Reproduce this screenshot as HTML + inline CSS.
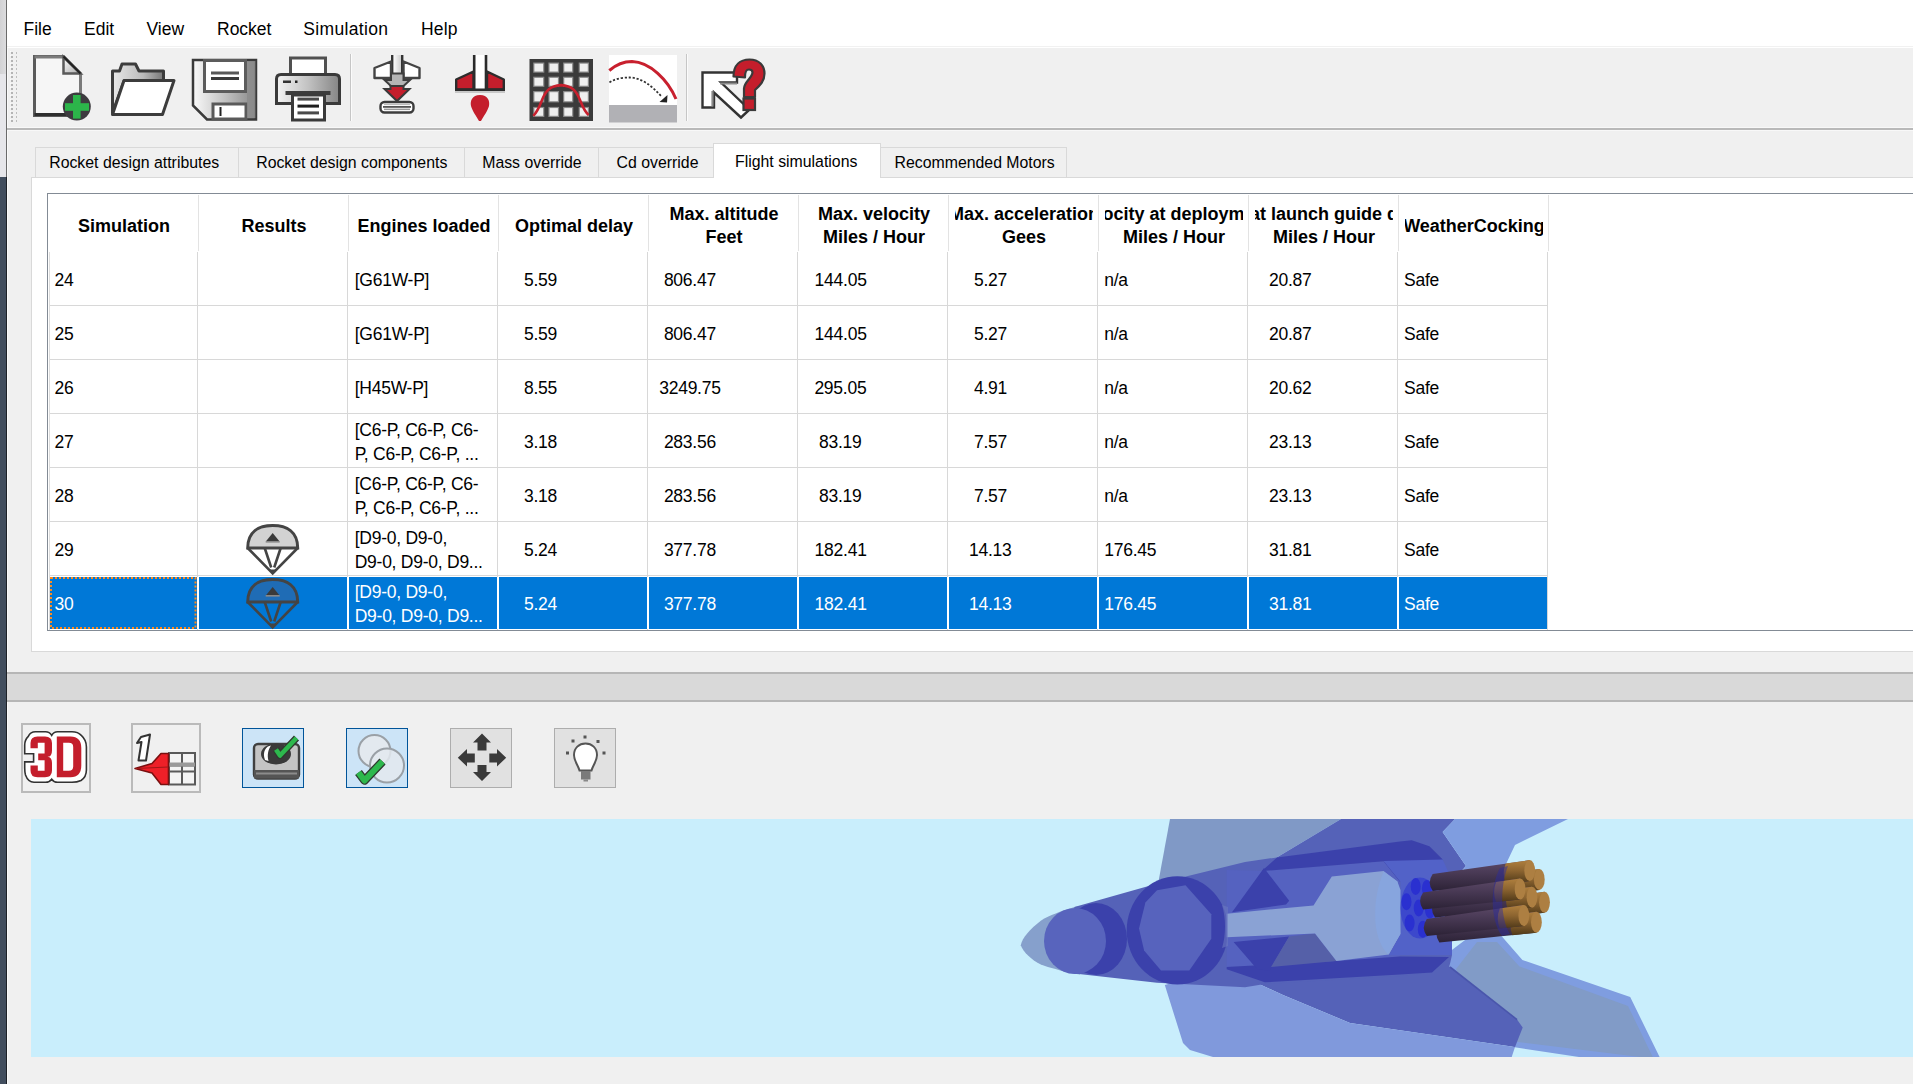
<!DOCTYPE html><html><head><meta charset="utf-8"><style>
html,body{margin:0;padding:0}
body{width:1913px;height:1084px;overflow:hidden;background:#f0f0f0;position:relative;font-family:"Liberation Sans",sans-serif;color:#000}
.a{position:absolute}
.t{position:absolute;white-space:pre;line-height:1}
svg{position:absolute;left:0;top:0;overflow:visible}
</style></head><body>

<div class="a" style="left:0px;top:0px;width:6px;height:74px;background:linear-gradient(90deg,#d2d2d4,#dcdcde);"></div>
<div class="a" style="left:0px;top:74px;width:6px;height:103px;background:#e6e6ea;"></div>
<div class="a" style="left:0px;top:177px;width:6px;height:907px;background:#424e5e;"></div>
<div class="a" style="left:6px;top:0px;width:1px;height:177px;background:#6a6a6a;"></div>
<div class="a" style="left:6px;top:177px;width:1px;height:907px;background:#1e2228;"></div>
<div class="a" style="left:7px;top:0px;width:1px;height:1084px;background:#fafafa;"></div>
<div class="a" style="left:7px;top:0px;width:1906px;height:46px;background:#fff;"></div>
<div class="a" style="left:7px;top:46px;width:1906px;height:1px;background:#f1f1f1;"></div>
<div class="a" style="left:7px;top:47px;width:1906px;height:1px;background:#fff;"></div>
<div class="t" style="left:23.50px;top:21.19px;font-size:17.5px;">File</div>
<div class="t" style="left:84.00px;top:21.19px;font-size:17.5px;">Edit</div>
<div class="t" style="left:146.50px;top:21.19px;font-size:17.5px;">View</div>
<div class="t" style="left:217.00px;top:21.19px;font-size:17.5px;">Rocket</div>
<div class="t" style="left:303.20px;top:21.19px;font-size:17.5px;letter-spacing:0.35px;">Simulation</div>
<div class="t" style="left:421.00px;top:21.19px;font-size:17.5px;letter-spacing:0.2px;">Help</div>
<div class="a" style="left:8px;top:127px;width:1905px;height:1px;background:#f8f8f8;"></div>
<div class="a" style="left:7px;top:128px;width:1906px;height:2px;background:#b9b9b9;"></div>
<div class="a" style="left:8px;top:130px;width:1905px;height:1px;background:#f8f8f8;"></div>
<div class="a" style="left:31px;top:177px;width:1882px;height:475px;background:#fff;border-left:1px solid #d9d9d9;border-top:1px solid #d9d9d9;border-bottom:1px solid #d9d9d9;box-sizing:border-box"></div>
<div class="a" style="left:35px;top:147px;width:204px;height:31px;background:#f0f0f0;border:1px solid #d9d9d9;box-sizing:border-box"></div>
<div class="t" style="left:49.20px;top:154.78px;font-size:15.85px;">Rocket design attributes</div>
<div class="a" style="left:238px;top:147px;width:227px;height:31px;background:#f0f0f0;border:1px solid #d9d9d9;box-sizing:border-box"></div>
<div class="t" style="left:256.20px;top:154.78px;font-size:15.85px;">Rocket design components</div>
<div class="a" style="left:464px;top:147px;width:135px;height:31px;background:#f0f0f0;border:1px solid #d9d9d9;box-sizing:border-box"></div>
<div class="t" style="left:482.20px;top:154.78px;font-size:15.85px;">Mass override</div>
<div class="a" style="left:598px;top:147px;width:116px;height:31px;background:#f0f0f0;border:1px solid #d9d9d9;box-sizing:border-box"></div>
<div class="t" style="left:616.60px;top:154.78px;font-size:15.85px;">Cd override</div>
<div class="a" style="left:880px;top:147px;width:187px;height:31px;background:#f0f0f0;border:1px solid #d9d9d9;box-sizing:border-box"></div>
<div class="t" style="left:894.50px;top:154.78px;font-size:15.85px;">Recommended Motors</div>
<div class="a" style="left:713px;top:143px;width:168px;height:35px;background:#fff;border:1px solid #d9d9d9;border-bottom:none;box-sizing:border-box"></div>
<div class="t" style="left:735.00px;top:153.58px;font-size:15.85px;">Flight simulations</div>
<div class="a" style="left:47px;top:193px;width:1866px;height:438px;background:#fff;border-left:1px solid #838b95;border-top:1px solid #838b95;border-bottom:1px solid #838b95;box-sizing:border-box"></div>
<div class="a" style="left:198px;top:195px;width:1px;height:56px;background:#e3e3e3;"></div>
<div class="a" style="left:348px;top:195px;width:1px;height:56px;background:#e3e3e3;"></div>
<div class="a" style="left:498px;top:195px;width:1px;height:56px;background:#e3e3e3;"></div>
<div class="a" style="left:648px;top:195px;width:1px;height:56px;background:#e3e3e3;"></div>
<div class="a" style="left:798px;top:195px;width:1px;height:56px;background:#e3e3e3;"></div>
<div class="a" style="left:948px;top:195px;width:1px;height:56px;background:#e3e3e3;"></div>
<div class="a" style="left:1098px;top:195px;width:1px;height:56px;background:#e3e3e3;"></div>
<div class="a" style="left:1248px;top:195px;width:1px;height:56px;background:#e3e3e3;"></div>
<div class="a" style="left:1398px;top:195px;width:1px;height:56px;background:#e3e3e3;"></div>
<div class="a" style="left:1548px;top:195px;width:1px;height:56px;background:#e3e3e3;"></div>
<div class="t" style="left:55px;top:216.76px;width:138px;height:22px;overflow:hidden;text-align:center;font-size:18px;font-weight:bold"><span style="display:inline-block;margin:0 -200px">Simulation</span></div>
<div class="t" style="left:205px;top:216.76px;width:138px;height:22px;overflow:hidden;text-align:center;font-size:18px;font-weight:bold"><span style="display:inline-block;margin:0 -200px">Results</span></div>
<div class="t" style="left:355px;top:216.76px;width:138px;height:22px;overflow:hidden;text-align:center;font-size:18px;font-weight:bold"><span style="display:inline-block;margin:0 -200px">Engines loaded</span></div>
<div class="t" style="left:505px;top:216.76px;width:138px;height:22px;overflow:hidden;text-align:center;font-size:18px;font-weight:bold"><span style="display:inline-block;margin:0 -200px">Optimal delay</span></div>
<div class="t" style="left:655px;top:204.76px;width:138px;height:22px;overflow:hidden;text-align:center;font-size:18px;font-weight:bold"><span style="display:inline-block;margin:0 -200px">Max. altitude</span></div>
<div class="t" style="left:655px;top:228.36px;width:138px;height:22px;overflow:hidden;text-align:center;font-size:18px;font-weight:bold"><span style="display:inline-block;margin:0 -200px">Feet</span></div>
<div class="t" style="left:805px;top:204.76px;width:138px;height:22px;overflow:hidden;text-align:center;font-size:18px;font-weight:bold"><span style="display:inline-block;margin:0 -200px">Max. velocity</span></div>
<div class="t" style="left:805px;top:228.36px;width:138px;height:22px;overflow:hidden;text-align:center;font-size:18px;font-weight:bold"><span style="display:inline-block;margin:0 -200px">Miles / Hour</span></div>
<div class="t" style="left:955px;top:204.76px;width:138px;height:22px;overflow:hidden;text-align:center;font-size:18px;font-weight:bold"><span style="display:inline-block;margin:0 -200px">Max. acceleration</span></div>
<div class="t" style="left:955px;top:228.36px;width:138px;height:22px;overflow:hidden;text-align:center;font-size:18px;font-weight:bold"><span style="display:inline-block;margin:0 -200px">Gees</span></div>
<div class="t" style="left:1105px;top:204.76px;width:138px;height:22px;overflow:hidden;font-size:18px;font-weight:bold"><span style="position:absolute;left:-2.5px;top:0">ocity at deployment</span></div>
<div class="t" style="left:1105px;top:228.36px;width:138px;height:22px;overflow:hidden;text-align:center;font-size:18px;font-weight:bold"><span style="display:inline-block;margin:0 -200px">Miles / Hour</span></div>
<div class="t" style="left:1255px;top:204.76px;width:138px;height:22px;overflow:hidden;font-size:18px;font-weight:bold"><span style="position:absolute;left:-5px;top:0">at launch guide departure</span></div>
<div class="t" style="left:1255px;top:228.36px;width:138px;height:22px;overflow:hidden;text-align:center;font-size:18px;font-weight:bold"><span style="display:inline-block;margin:0 -200px">Miles / Hour</span></div>
<div class="t" style="left:1405px;top:216.76px;width:138px;height:22px;overflow:hidden;text-align:center;font-size:18px;font-weight:bold"><span style="display:inline-block;margin:0 -200px">WeatherCocking</span></div>
<div class="a" style="left:49px;top:252px;width:1px;height:378px;background:#dcdcdc;"></div>
<div class="a" style="left:50px;top:305px;width:1498px;height:1px;background:#d8d8d8;"></div>
<div class="a" style="left:50px;top:359px;width:1498px;height:1px;background:#d8d8d8;"></div>
<div class="a" style="left:50px;top:413px;width:1498px;height:1px;background:#d8d8d8;"></div>
<div class="a" style="left:50px;top:467px;width:1498px;height:1px;background:#d8d8d8;"></div>
<div class="a" style="left:50px;top:521px;width:1498px;height:1px;background:#d8d8d8;"></div>
<div class="a" style="left:50px;top:575px;width:1498px;height:1px;background:#d8d8d8;"></div>
<div class="a" style="left:197px;top:252px;width:1px;height:378px;background:#d8d8d8;"></div>
<div class="a" style="left:347px;top:252px;width:1px;height:378px;background:#d8d8d8;"></div>
<div class="a" style="left:497px;top:252px;width:1px;height:378px;background:#d8d8d8;"></div>
<div class="a" style="left:647px;top:252px;width:1px;height:378px;background:#d8d8d8;"></div>
<div class="a" style="left:797px;top:252px;width:1px;height:378px;background:#d8d8d8;"></div>
<div class="a" style="left:947px;top:252px;width:1px;height:378px;background:#d8d8d8;"></div>
<div class="a" style="left:1097px;top:252px;width:1px;height:378px;background:#d8d8d8;"></div>
<div class="a" style="left:1247px;top:252px;width:1px;height:378px;background:#d8d8d8;"></div>
<div class="a" style="left:1397px;top:252px;width:1px;height:378px;background:#d8d8d8;"></div>
<div class="a" style="left:1547px;top:252px;width:1px;height:378px;background:#d8d8d8;"></div>
<div class="a" style="left:50px;top:577px;width:1497px;height:52px;background:#0078d7;"></div>
<div class="a" style="left:197px;top:577px;width:2px;height:52px;background:#fff;"></div>
<div class="a" style="left:347px;top:577px;width:2px;height:52px;background:#fff;"></div>
<div class="a" style="left:497px;top:577px;width:2px;height:52px;background:#fff;"></div>
<div class="a" style="left:647px;top:577px;width:2px;height:52px;background:#fff;"></div>
<div class="a" style="left:797px;top:577px;width:2px;height:52px;background:#fff;"></div>
<div class="a" style="left:947px;top:577px;width:2px;height:52px;background:#fff;"></div>
<div class="a" style="left:1097px;top:577px;width:2px;height:52px;background:#fff;"></div>
<div class="a" style="left:1247px;top:577px;width:2px;height:52px;background:#fff;"></div>
<div class="a" style="left:1397px;top:577px;width:2px;height:52px;background:#fff;"></div>
<svg style="left:0;top:0" width="300" height="700"><rect x="51" y="578" width="144.5" height="50" fill="none" stroke="#ff8a1c" stroke-width="2" stroke-dasharray="2,2"/></svg>
<div class="t" style="left:54.50px;top:272.09px;font-size:17.5px;letter-spacing:-0.25px;">24</div>
<div class="t" style="left:354.70px;top:272.09px;font-size:17.5px;letter-spacing:-0.25px;">[G61W-P]</div>
<div class="t" style="left:524.00px;top:272.09px;font-size:17.5px;letter-spacing:-0.25px;">5.59</div>
<div class="t" style="left:663.90px;top:272.09px;font-size:17.5px;letter-spacing:-0.25px;">806.47</div>
<div class="t" style="left:814.60px;top:272.09px;font-size:17.5px;letter-spacing:-0.25px;">144.05</div>
<div class="t" style="left:974.00px;top:272.09px;font-size:17.5px;letter-spacing:-0.25px;">5.27</div>
<div class="t" style="left:1104.20px;top:272.09px;font-size:17.5px;letter-spacing:-0.25px;">n/a</div>
<div class="t" style="left:1269.00px;top:272.09px;font-size:17.5px;letter-spacing:-0.25px;">20.87</div>
<div class="t" style="left:1404.00px;top:272.09px;font-size:17.5px;letter-spacing:-0.25px;">Safe</div>
<div class="t" style="left:54.50px;top:326.09px;font-size:17.5px;letter-spacing:-0.25px;">25</div>
<div class="t" style="left:354.70px;top:326.09px;font-size:17.5px;letter-spacing:-0.25px;">[G61W-P]</div>
<div class="t" style="left:524.00px;top:326.09px;font-size:17.5px;letter-spacing:-0.25px;">5.59</div>
<div class="t" style="left:663.90px;top:326.09px;font-size:17.5px;letter-spacing:-0.25px;">806.47</div>
<div class="t" style="left:814.60px;top:326.09px;font-size:17.5px;letter-spacing:-0.25px;">144.05</div>
<div class="t" style="left:974.00px;top:326.09px;font-size:17.5px;letter-spacing:-0.25px;">5.27</div>
<div class="t" style="left:1104.20px;top:326.09px;font-size:17.5px;letter-spacing:-0.25px;">n/a</div>
<div class="t" style="left:1269.00px;top:326.09px;font-size:17.5px;letter-spacing:-0.25px;">20.87</div>
<div class="t" style="left:1404.00px;top:326.09px;font-size:17.5px;letter-spacing:-0.25px;">Safe</div>
<div class="t" style="left:54.50px;top:380.09px;font-size:17.5px;letter-spacing:-0.25px;">26</div>
<div class="t" style="left:354.70px;top:380.09px;font-size:17.5px;letter-spacing:-0.25px;">[H45W-P]</div>
<div class="t" style="left:524.00px;top:380.09px;font-size:17.5px;letter-spacing:-0.25px;">8.55</div>
<div class="t" style="left:659.20px;top:380.09px;font-size:17.5px;letter-spacing:-0.25px;">3249.75</div>
<div class="t" style="left:814.40px;top:380.09px;font-size:17.5px;letter-spacing:-0.25px;">295.05</div>
<div class="t" style="left:974.00px;top:380.09px;font-size:17.5px;letter-spacing:-0.25px;">4.91</div>
<div class="t" style="left:1104.20px;top:380.09px;font-size:17.5px;letter-spacing:-0.25px;">n/a</div>
<div class="t" style="left:1269.00px;top:380.09px;font-size:17.5px;letter-spacing:-0.25px;">20.62</div>
<div class="t" style="left:1404.00px;top:380.09px;font-size:17.5px;letter-spacing:-0.25px;">Safe</div>
<div class="t" style="left:54.50px;top:434.09px;font-size:17.5px;letter-spacing:-0.25px;">27</div>
<div class="t" style="left:354.70px;top:422.09px;font-size:17.5px;letter-spacing:-0.25px;">[C6-P, C6-P, C6-</div>
<div class="t" style="left:354.70px;top:446.09px;font-size:17.5px;letter-spacing:-0.25px;">P, C6-P, C6-P, ...</div>
<div class="t" style="left:524.00px;top:434.09px;font-size:17.5px;letter-spacing:-0.25px;">3.18</div>
<div class="t" style="left:663.90px;top:434.09px;font-size:17.5px;letter-spacing:-0.25px;">283.56</div>
<div class="t" style="left:819.00px;top:434.09px;font-size:17.5px;letter-spacing:-0.25px;">83.19</div>
<div class="t" style="left:974.00px;top:434.09px;font-size:17.5px;letter-spacing:-0.25px;">7.57</div>
<div class="t" style="left:1104.20px;top:434.09px;font-size:17.5px;letter-spacing:-0.25px;">n/a</div>
<div class="t" style="left:1269.00px;top:434.09px;font-size:17.5px;letter-spacing:-0.25px;">23.13</div>
<div class="t" style="left:1404.00px;top:434.09px;font-size:17.5px;letter-spacing:-0.25px;">Safe</div>
<div class="t" style="left:54.50px;top:488.09px;font-size:17.5px;letter-spacing:-0.25px;">28</div>
<div class="t" style="left:354.70px;top:476.09px;font-size:17.5px;letter-spacing:-0.25px;">[C6-P, C6-P, C6-</div>
<div class="t" style="left:354.70px;top:500.09px;font-size:17.5px;letter-spacing:-0.25px;">P, C6-P, C6-P, ...</div>
<div class="t" style="left:524.00px;top:488.09px;font-size:17.5px;letter-spacing:-0.25px;">3.18</div>
<div class="t" style="left:663.90px;top:488.09px;font-size:17.5px;letter-spacing:-0.25px;">283.56</div>
<div class="t" style="left:819.00px;top:488.09px;font-size:17.5px;letter-spacing:-0.25px;">83.19</div>
<div class="t" style="left:974.00px;top:488.09px;font-size:17.5px;letter-spacing:-0.25px;">7.57</div>
<div class="t" style="left:1104.20px;top:488.09px;font-size:17.5px;letter-spacing:-0.25px;">n/a</div>
<div class="t" style="left:1269.00px;top:488.09px;font-size:17.5px;letter-spacing:-0.25px;">23.13</div>
<div class="t" style="left:1404.00px;top:488.09px;font-size:17.5px;letter-spacing:-0.25px;">Safe</div>
<div class="t" style="left:54.50px;top:542.09px;font-size:17.5px;letter-spacing:-0.25px;">29</div>
<div class="t" style="left:354.70px;top:530.09px;font-size:17.5px;letter-spacing:-0.25px;">[D9-0, D9-0,</div>
<div class="t" style="left:354.70px;top:554.09px;font-size:17.5px;letter-spacing:-0.25px;">D9-0, D9-0, D9...</div>
<div class="t" style="left:524.00px;top:542.09px;font-size:17.5px;letter-spacing:-0.25px;">5.24</div>
<div class="t" style="left:663.90px;top:542.09px;font-size:17.5px;letter-spacing:-0.25px;">377.78</div>
<div class="t" style="left:814.60px;top:542.09px;font-size:17.5px;letter-spacing:-0.25px;">182.41</div>
<div class="t" style="left:969.00px;top:542.09px;font-size:17.5px;letter-spacing:-0.25px;">14.13</div>
<div class="t" style="left:1104.20px;top:542.09px;font-size:17.5px;letter-spacing:-0.25px;">176.45</div>
<div class="t" style="left:1269.00px;top:542.09px;font-size:17.5px;letter-spacing:-0.25px;">31.81</div>
<div class="t" style="left:1404.00px;top:542.09px;font-size:17.5px;letter-spacing:-0.25px;">Safe</div>
<div class="t" style="left:54.50px;top:596.09px;font-size:17.5px;color:#fff;letter-spacing:-0.25px;">30</div>
<div class="t" style="left:354.70px;top:584.09px;font-size:17.5px;color:#fff;letter-spacing:-0.25px;">[D9-0, D9-0,</div>
<div class="t" style="left:354.70px;top:608.09px;font-size:17.5px;color:#fff;letter-spacing:-0.25px;">D9-0, D9-0, D9...</div>
<div class="t" style="left:524.00px;top:596.09px;font-size:17.5px;color:#fff;letter-spacing:-0.25px;">5.24</div>
<div class="t" style="left:663.90px;top:596.09px;font-size:17.5px;color:#fff;letter-spacing:-0.25px;">377.78</div>
<div class="t" style="left:814.60px;top:596.09px;font-size:17.5px;color:#fff;letter-spacing:-0.25px;">182.41</div>
<div class="t" style="left:969.00px;top:596.09px;font-size:17.5px;color:#fff;letter-spacing:-0.25px;">14.13</div>
<div class="t" style="left:1104.20px;top:596.09px;font-size:17.5px;color:#fff;letter-spacing:-0.25px;">176.45</div>
<div class="t" style="left:1269.00px;top:596.09px;font-size:17.5px;color:#fff;letter-spacing:-0.25px;">31.81</div>
<div class="t" style="left:1404.00px;top:596.09px;font-size:17.5px;color:#fff;letter-spacing:-0.25px;">Safe</div>
<div class="a" style="left:7px;top:672px;width:1906px;height:2px;background:#b6b6b6;"></div>
<div class="a" style="left:7px;top:674px;width:1906px;height:26px;background:#d9d9d9;"></div>
<div class="a" style="left:7px;top:700px;width:1906px;height:2px;background:#b6b6b6;"></div>
<div class="a" style="left:21px;top:723px;width:70px;height:70px;background:#f0f0f0;border:2px solid #bababa;box-sizing:border-box"></div>
<div class="a" style="left:131px;top:723px;width:70px;height:70px;background:#f0f0f0;border:2px solid #bababa;box-sizing:border-box"></div>
<div class="a" style="left:242px;top:728px;width:62px;height:60px;background:#cce4f7;border:1px solid #005499;box-sizing:border-box"></div>
<div class="a" style="left:346px;top:728px;width:62px;height:60px;background:#cce4f7;border:1px solid #005499;box-sizing:border-box"></div>
<div class="a" style="left:450px;top:728px;width:62px;height:60px;background:#e1e1e1;border:1px solid #adadad;box-sizing:border-box"></div>
<div class="a" style="left:554px;top:728px;width:62px;height:60px;background:#e1e1e1;border:1px solid #adadad;box-sizing:border-box"></div>
<div class="a" style="left:31px;top:819px;width:1882px;height:238px;background:#c9eefc;"></div>
<svg width="1913" height="1084" viewBox="0 0 1913 1084"><rect x="11" y="52" width="2" height="2" fill="#b4b4b4"/><rect x="10" y="51" width="1" height="1" fill="#fafafa"/><rect x="16" y="52" width="1" height="2" fill="#bdbdbd"/><rect x="11" y="56" width="2" height="2" fill="#b4b4b4"/><rect x="10" y="55" width="1" height="1" fill="#fafafa"/><rect x="16" y="56" width="1" height="2" fill="#bdbdbd"/><rect x="11" y="60" width="2" height="2" fill="#b4b4b4"/><rect x="10" y="59" width="1" height="1" fill="#fafafa"/><rect x="16" y="60" width="1" height="2" fill="#bdbdbd"/><rect x="11" y="64" width="2" height="2" fill="#b4b4b4"/><rect x="10" y="63" width="1" height="1" fill="#fafafa"/><rect x="16" y="64" width="1" height="2" fill="#bdbdbd"/><rect x="11" y="68" width="2" height="2" fill="#b4b4b4"/><rect x="10" y="67" width="1" height="1" fill="#fafafa"/><rect x="16" y="68" width="1" height="2" fill="#bdbdbd"/><rect x="11" y="72" width="2" height="2" fill="#b4b4b4"/><rect x="10" y="71" width="1" height="1" fill="#fafafa"/><rect x="16" y="72" width="1" height="2" fill="#bdbdbd"/><rect x="11" y="76" width="2" height="2" fill="#b4b4b4"/><rect x="10" y="75" width="1" height="1" fill="#fafafa"/><rect x="16" y="76" width="1" height="2" fill="#bdbdbd"/><rect x="11" y="80" width="2" height="2" fill="#b4b4b4"/><rect x="10" y="79" width="1" height="1" fill="#fafafa"/><rect x="16" y="80" width="1" height="2" fill="#bdbdbd"/><rect x="11" y="84" width="2" height="2" fill="#b4b4b4"/><rect x="10" y="83" width="1" height="1" fill="#fafafa"/><rect x="16" y="84" width="1" height="2" fill="#bdbdbd"/><rect x="11" y="88" width="2" height="2" fill="#b4b4b4"/><rect x="10" y="87" width="1" height="1" fill="#fafafa"/><rect x="16" y="88" width="1" height="2" fill="#bdbdbd"/><rect x="11" y="92" width="2" height="2" fill="#b4b4b4"/><rect x="10" y="91" width="1" height="1" fill="#fafafa"/><rect x="16" y="92" width="1" height="2" fill="#bdbdbd"/><rect x="11" y="96" width="2" height="2" fill="#b4b4b4"/><rect x="10" y="95" width="1" height="1" fill="#fafafa"/><rect x="16" y="96" width="1" height="2" fill="#bdbdbd"/><rect x="11" y="100" width="2" height="2" fill="#b4b4b4"/><rect x="10" y="99" width="1" height="1" fill="#fafafa"/><rect x="16" y="100" width="1" height="2" fill="#bdbdbd"/><rect x="11" y="104" width="2" height="2" fill="#b4b4b4"/><rect x="10" y="103" width="1" height="1" fill="#fafafa"/><rect x="16" y="104" width="1" height="2" fill="#bdbdbd"/><rect x="11" y="108" width="2" height="2" fill="#b4b4b4"/><rect x="10" y="107" width="1" height="1" fill="#fafafa"/><rect x="16" y="108" width="1" height="2" fill="#bdbdbd"/><rect x="11" y="112" width="2" height="2" fill="#b4b4b4"/><rect x="10" y="111" width="1" height="1" fill="#fafafa"/><rect x="16" y="112" width="1" height="2" fill="#bdbdbd"/><rect x="11" y="116" width="2" height="2" fill="#b4b4b4"/><rect x="10" y="115" width="1" height="1" fill="#fafafa"/><rect x="16" y="116" width="1" height="2" fill="#bdbdbd"/><rect x="11" y="120" width="2" height="2" fill="#b4b4b4"/><rect x="10" y="119" width="1" height="1" fill="#fafafa"/><rect x="16" y="120" width="1" height="2" fill="#bdbdbd"/><rect x="350" y="54" width="1" height="67" fill="#c6c6c6"/><rect x="351" y="54" width="1" height="67" fill="#fbfbfb"/><rect x="686" y="54" width="1" height="67" fill="#c6c6c6"/><rect x="687" y="54" width="1" height="67" fill="#fbfbfb"/><defs><linearGradient id="gFold" x1="0" y1="0" x2="1" y2="1"><stop offset="0" stop-color="#fff"/><stop offset="1" stop-color="#aaa"/></linearGradient><linearGradient id="gSave" x1="0" y1="0" x2="1" y2="0"><stop offset="0" stop-color="#fafafa"/><stop offset="0.55" stop-color="#bdbdbd"/><stop offset="1" stop-color="#888"/></linearGradient><linearGradient id="gPrn" x1="0" y1="0" x2="1" y2="0"><stop offset="0" stop-color="#f4f4f4"/><stop offset="0.5" stop-color="#c2c2c2"/><stop offset="1" stop-color="#858585"/></linearGradient><linearGradient id="gFold2" x1="0" y1="0" x2="1" y2="0"><stop offset="0" stop-color="#e8e8e8"/><stop offset="0.6" stop-color="#bbb"/><stop offset="1" stop-color="#777"/></linearGradient><linearGradient id="gTube" x1="0" y1="0" x2="1" y2="0"><stop offset="0" stop-color="#fff"/><stop offset="1" stop-color="#ccc"/></linearGradient></defs><path d="M34.5,56.5 H63.5 L80.5,73.5 V115.5 H34.5 Z" fill="#f6f6f6" stroke="#5a5a5a" stroke-width="3"/><path d="M34.5,57 H63.5 L80.5,74 V94" fill="none" stroke="#7a7a7a" stroke-width="3"/><path d="M34.5,114.5 H66" fill="none" stroke="#2e2e2e" stroke-width="3"/><path d="M63.5,57 V73.5 H80.5 Z" fill="url(#gFold)" stroke="#5a5a5a" stroke-width="2.5" stroke-linejoin="miter"/><path d="M63.5,56.5 L80.5,73.5" stroke="#222" stroke-width="2"/><circle cx="76.8" cy="106.6" r="14" fill="#3d3b3f"/><rect x="73" y="95" width="7.6" height="23.6" fill="#2cb54a"/><rect x="65" y="103.2" width="24" height="7.6" fill="#2cb54a"/><path d="M112.5,71 H119.5 L122,64 H135.5 L139,71 H163.5 V81 H124 L112.5,113 Z" fill="url(#gFold2)" stroke="#3c3c3c" stroke-width="3" stroke-linejoin="round"/><path d="M124,80.5 H174 L162.5,114.5 H112.5 Z" fill="#fff" stroke="#3c3c3c" stroke-width="3" stroke-linejoin="round"/><path d="M193,60 H256 V119.5 H207 L193,105.5 Z" fill="url(#gSave)" stroke="#3a3a3a" stroke-width="2.5"/><rect x="204.5" y="60.5" width="41" height="31" fill="#fff" stroke="#5c5c5c" stroke-width="3"/><rect x="211" y="71.5" width="28" height="3" fill="#585858"/><rect x="211" y="77" width="28" height="3" fill="#3a3a3a"/><rect x="213" y="104" width="33" height="15" fill="#fff" stroke="#5a5a5a" stroke-width="3"/><rect x="219.5" y="107" width="2" height="9" fill="#222"/><rect x="247" y="61" width="8.5" height="57" fill="#8a8a8a" opacity="0.7"/><rect x="290.5" y="58" width="35" height="17" fill="#fff" stroke="#505050" stroke-width="3"/><path d="M276.5,79 Q276.5,74.5 281,74.5 H335 Q339.5,74.5 339.5,79 V103.5 H276.5 Z" fill="url(#gPrn)" stroke="#3a3a3a" stroke-width="3"/><rect x="283" y="80.5" width="8" height="2.5" fill="#333"/><rect x="295" y="80.5" width="2.5" height="2.5" fill="#222"/><rect x="285.5" y="91" width="45" height="4" fill="#3c3c3c"/><rect x="292.5" y="95" width="32" height="25" fill="#fff" stroke="#3a3a3a" stroke-width="3"/><rect x="297.5" y="97.6" width="21.5" height="3" fill="#4a4a4a"/><rect x="297.5" y="104.6" width="21.5" height="3" fill="#1e1e1e"/><rect x="297.5" y="111.4" width="21.5" height="3" fill="#4a4a4a"/><rect x="393" y="55" width="8.5" height="19" fill="url(#gTube)"/><path d="M392.2,55 V75 M402.2,55 V75" stroke="#333" stroke-width="2.4"/><path d="M374.5,68 L391,61.5 V78 H374.5 Z M419.5,68 L403.5,61.5 V78 H419.5 Z" fill="#fff" stroke="#444" stroke-width="2.4" stroke-linejoin="round"/><path d="M391,73.5 H403.5 V80 H410 L397.2,92 L384.5,80 H391 Z" fill="#b4b4b4" stroke="#3e3e3e" stroke-width="2"/><path d="M390.5,86 H403.5 V89 H409.5 L397,101 L384.5,89 H390.5 Z" fill="#c41e2c" stroke="#3a3a3a" stroke-width="2"/><rect x="380.5" y="102" width="33" height="10.5" rx="4" fill="#fff" stroke="#3c3c3c" stroke-width="2.4"/><rect x="383" y="106" width="28" height="1.8" fill="#555"/><rect x="384" y="103.6" width="26" height="1.5" fill="#bbb"/><rect x="384" y="108.6" width="26" height="1.5" fill="#999"/><rect x="475" y="55" width="10" height="35" fill="#fff"/><path d="M474.2,55 V90 M486,55 V90" stroke="#2a2a2a" stroke-width="2.6"/><path d="M456.2,79.5 L473.5,71.5 V89.5 H456.2 Z M503.8,79.5 L487,71.5 V89.5 H503.8 Z" fill="#c41e2c" stroke="#2d2d2d" stroke-width="2.4" stroke-linejoin="round"/><rect x="455" y="88.5" width="50" height="2.5" fill="#2d2d2d"/><rect x="455" y="91" width="50" height="2" fill="#c8c8c8"/><path d="M480,95 C488,95 490,101 489,106 C488,110 484,116 481,121 H479 C476,116 472,110 471,106 C470,101 472,95 480,95 Z" fill="#c41e2c"/><rect x="529.5" y="59" width="63.5" height="62" fill="#3b3b3b"/><rect x="533.2" y="62.5" width="11.1" height="10.2" fill="#8a8a8a"/><rect x="534.4" y="63.7" width="8.7" height="7.8" fill="#efefef"/><rect x="533.2" y="76.7" width="11.1" height="10.2" fill="#8a8a8a"/><rect x="534.4" y="77.9" width="8.7" height="7.8" fill="#efefef"/><rect x="533.2" y="91" width="11.1" height="11.4" fill="#8a8a8a"/><rect x="534.4" y="92.2" width="8.7" height="9.0" fill="#efefef"/><rect x="533.2" y="106.9" width="11.1" height="10.1" fill="#8a8a8a"/><rect x="534.4" y="108.1" width="8.7" height="7.7" fill="#efefef"/><rect x="548.4" y="62.5" width="10.7" height="10.2" fill="#8a8a8a"/><rect x="549.6" y="63.7" width="8.3" height="7.8" fill="#efefef"/><rect x="548.4" y="76.7" width="10.7" height="10.2" fill="#8a8a8a"/><rect x="549.6" y="77.9" width="8.3" height="7.8" fill="#efefef"/><rect x="548.4" y="91" width="10.7" height="11.4" fill="#8a8a8a"/><rect x="549.6" y="92.2" width="8.3" height="9.0" fill="#efefef"/><rect x="548.4" y="106.9" width="10.7" height="10.1" fill="#8a8a8a"/><rect x="549.6" y="108.1" width="8.3" height="7.7" fill="#efefef"/><rect x="563.1" y="62.5" width="10.2" height="10.2" fill="#8a8a8a"/><rect x="564.3" y="63.7" width="7.8" height="7.8" fill="#efefef"/><rect x="563.1" y="76.7" width="10.2" height="10.2" fill="#8a8a8a"/><rect x="564.3" y="77.9" width="7.8" height="7.8" fill="#efefef"/><rect x="563.1" y="91" width="10.2" height="11.4" fill="#8a8a8a"/><rect x="564.3" y="92.2" width="7.8" height="9.0" fill="#efefef"/><rect x="563.1" y="106.9" width="10.2" height="10.1" fill="#8a8a8a"/><rect x="564.3" y="108.1" width="7.8" height="7.7" fill="#efefef"/><rect x="578.7" y="62.5" width="10.3" height="10.2" fill="#8a8a8a"/><rect x="579.9" y="63.7" width="7.9" height="7.8" fill="#efefef"/><rect x="578.7" y="76.7" width="10.3" height="10.2" fill="#8a8a8a"/><rect x="579.9" y="77.9" width="7.9" height="7.8" fill="#efefef"/><rect x="578.7" y="91" width="10.3" height="11.4" fill="#8a8a8a"/><rect x="579.9" y="92.2" width="7.9" height="9.0" fill="#efefef"/><rect x="578.7" y="106.9" width="10.3" height="10.1" fill="#8a8a8a"/><rect x="579.9" y="108.1" width="7.9" height="7.7" fill="#efefef"/><path d="M533.3,115.8 C538,111 540,105 542,100 C546,90 550,86 561,85.1 C572,86 576,90 580,100 C582,105 584,111 588.6,115" fill="none" stroke="#c8202e" stroke-width="2.6"/><rect x="609" y="55" width="68" height="50" fill="#fff"/><rect x="609" y="105" width="68" height="17.5" fill="#b1b1b5"/><path d="M609.3,70.5 C618,63 626,61.5 632,61.5 C650,62 668,80 676,99" fill="none" stroke="#c8202e" stroke-width="3"/><path d="M609.5,82.5 C616,78 624,77.5 630,77.5 C642,78 652,86 661,96" fill="none" stroke="#333" stroke-width="1.8" stroke-dasharray="2.2,1.8"/><path d="M667.5,95 L667,102.5 L659.5,102 Z" fill="#222"/><path d="M702.5,72.5 H737 V82.5 H721 L743.5,104 L748,111 L741,117.5 L714,92.5 V107.5 H702.5 Z" fill="#fff" stroke="#333" stroke-width="2.4" stroke-linejoin="miter"/><path d="M712.5,91 V106.5 M720,83.5 H737" fill="none" stroke="#8a8a8a" stroke-width="2.2"/><path d="M733.5,76.5 C733.5,65 740,59.5 749.5,59.5 C759,59.5 764.5,65.5 764.5,73.5 C764.5,81 760,85.5 755,90 V97 H744 V88.5 C744,82 752.5,77.5 752.5,72.5 C752.5,70 751,69.5 749,69.5 C746,69.5 745,71.5 745,77.5 Z" fill="#c41e2c" stroke="#3a3a3a" stroke-width="2.2" stroke-linejoin="round"/><rect x="743.5" y="98.5" width="11.5" height="11.5" fill="#c41e2c" stroke="#3a3a3a" stroke-width="2.2"/><path d="M247.7,548 L272.7,573.5 L297.7,548 Z" fill="#ffffff"/><path d="M247.7,548 C247.7,531.5 258.7,525.5 272.7,525.5 C286.7,525.5 297.7,531.5 297.7,548 Z" fill="#d2d2d2" stroke="#444" stroke-width="3"/><path d="M247.7,548 L272.7,573.5 L297.7,548 M264.7,548 L271.2,567.5 M280.7,548 L274.2,567.5" fill="none" stroke="#444" stroke-width="2.6"/><path d="M272.7,533.0 L279.2,541.0 H266.2 Z" fill="#3a3a3a"/><rect x="265.7" y="541.0" width="14" height="1.6" fill="#888"/><path d="M269.7,569.5 H275.7 L272.7,574.5 Z" fill="#444"/><path d="M247.7,602 L272.7,627.5 L297.7,602 Z" fill="#0078d7"/><path d="M247.7,602 C247.7,585.5 258.7,579.5 272.7,579.5 C286.7,579.5 297.7,585.5 297.7,602 Z" fill="#1f6cb5" stroke="#444" stroke-width="3"/><path d="M247.7,602 L272.7,627.5 L297.7,602 M264.7,602 L271.2,621.5 M280.7,602 L274.2,621.5" fill="none" stroke="#444" stroke-width="2.6"/><path d="M272.7,587.0 L279.2,595.0 H266.2 Z" fill="#3a3a3a"/><rect x="265.7" y="595.0" width="14" height="1.6" fill="#888"/><path d="M269.7,623.5 H275.7 L272.7,628.5 Z" fill="#444"/><path d="M28.3,736.4 Q30.5,731.8 35.4,731.8 H45.6 Q49.5,731.8 51.7,735.4 Q53.8,731.8 57.5,731.8 H72 Q78,731.8 81.3,735.4 Q86.4,740 86.4,747 V770 Q86.4,777 81,780.5 Q77,782.3 72,782.3 H57.5 Q53.8,782.3 51.7,779.2 Q49.5,782.3 45.6,782.3 H34 Q28,782 25.5,775 Q24.7,772 24.7,768 V761.9 H33.6 V753.7 H24.7 V745 Q24.7,740 28.3,736.4 Z" fill="#fff" stroke="#333" stroke-width="1.6"/><path d="M30.5,743 Q30.5,736.4 37.5,736.4 H45 Q52,736.4 52,743 V750.5 Q52,756.8 47.5,756.8 Q52,757.2 52,763 V770.5 Q52,777.2 45,777.2 H37.5 Q30.5,777.2 30.5,770.5 V765.5 H37.8 V770.8 H44.6 V760.2 H38.2 V753.4 H44.6 V742.8 H37.8 V748.2 H30.5 Z" fill="#c41e2c"/><path fill-rule="evenodd" d="M56.8,736.4 H70.5 Q81.3,736.4 81.3,748 V765.6 Q81.3,777.2 70.5,777.2 H56.8 Z M63.2,742.8 H68.8 Q73.2,742.8 73.2,747 V766.6 Q73.2,770.8 68.8,770.8 H63.2 Z" fill="#c41e2c"/><path d="M141,737 L150,734.5 L146,760.5 H138.5 L141.5,742 L137,743 Z" fill="#fff" stroke="#333" stroke-width="2" stroke-linejoin="round"/><rect x="169" y="753" width="26" height="31.5" fill="#f4f4f4" stroke="#5a5a5a" stroke-width="2"/><path d="M182,753 V784.5 M169,765.5 H195 M169,771.5 H195" stroke="#5a5a5a" stroke-width="2"/><rect x="169" y="762.5" width="26" height="4" fill="#9a9a9a"/><path d="M135,768.5 L152,763.5 L161,753.5 H168.5 V784.5 H161 L152,773 Z" fill="#ee2028" stroke="#7a1010" stroke-width="1.6" stroke-linejoin="round"/><path d="M136,768.5 L168,767" stroke="#a01818" stroke-width="1.2"/><rect x="254" y="744" width="45" height="34.5" rx="4" fill="#c4c4c4" stroke="#404040" stroke-width="2.4"/><rect x="254" y="770" width="45" height="8.5" fill="#555"/><rect x="256" y="772.5" width="41" height="2" fill="#8c8c8c"/><ellipse cx="276" cy="754" rx="15" ry="10.5" fill="#3a3a3a"/><path d="M265,760 C262,752 266,746 271,745.5 C268,750 267,755 268.5,761 Z" fill="#fff"/><path d="M276,749.5 L280,755.5 L296.5,738" fill="none" stroke="#2f3a2f" stroke-width="7" stroke-linejoin="round"/><path d="M276,749.5 L280,755.5 L296.5,738" fill="none" stroke="#2db84d" stroke-width="4.6" stroke-linejoin="round"/><circle cx="374.5" cy="751" r="16" fill="#e3e9ef" stroke="#9aa0a6" stroke-width="2"/><circle cx="387" cy="765.5" r="17" fill="#e3e9ef" fill-opacity="0.85" stroke="#9aa0a6" stroke-width="2"/><path d="M358.5,772.5 L364.5,780.5 L382.5,761.5" fill="none" stroke="#2f3a2f" stroke-width="8.5" stroke-linejoin="round"/><path d="M358.5,772.5 L364.5,780.5 L382.5,761.5" fill="none" stroke="#2db84d" stroke-width="6" stroke-linejoin="round"/><path d="M482,733.5 L491,742.5 H486.5 V750.5 H477.5 V742.5 H473 Z" fill="#3a3a3a"/><path d="M482,781 L491,772 H486.5 V765 H477.5 V772 H473 Z" fill="#3a3a3a"/><path d="M457.8,757.7 L467,749 V753.5 H474.8 V762.5 H467 V766.5 Z" fill="#3a3a3a"/><path d="M506.2,757.7 L497,749 V753.5 H489.3 V762.5 H497 V766.5 Z" fill="#3a3a3a"/><path d="M585.5,743.5 C592,743.5 597,748 597,755 C597,761 593,765 591.5,770.5 H579.5 C578,765 574,761 574,755 C574,748 579,743.5 585.5,743.5 Z" fill="#fff" stroke="#555" stroke-width="2"/><rect x="581" y="771" width="9.5" height="8.5" fill="#7a7a7a"/><rect x="583.5" y="779.5" width="4.5" height="2" fill="#888"/><rect x="583.5" y="735.5" width="3" height="3" fill="#555"/><rect x="571.5" y="739.5" width="3" height="3" fill="#555"/><rect x="596.5" y="740.0" width="3" height="3" fill="#555"/><rect x="566.0" y="751.5" width="3" height="3" fill="#555"/><rect x="602.5" y="751.5" width="3" height="3" fill="#555"/><svg x="31" y="819" width="1882" height="238" viewBox="31 819 1882 238" style="overflow:hidden"><polygon points="1170.0,819.0 1341.0,819.0 1223.7,889.4 1157.0,889.4" fill="#8099c6"/><polygon points="1341.0,819.0 1455.0,819.0 1442.6,832.0 1466.0,866.0 1430.0,905.0 1223.7,889.4" fill="#5562b8"/><polygon points="1455.0,819.0 1568.0,819.0 1515.0,845.0 1506.0,864.0 1498.0,900.0 1440.0,900.0 1466.0,866.0 1442.6,832.0" fill="#7f9de0"/><polygon points="1448.6,952.5 1470.0,936.3 1501.7,936.3 1522.4,960.0 1630.2,997.0 1659.6,1057.0 1579.0,1057.0 1513.0,1047.0 1450.0,975.0" fill="#7f9de0"/><polygon points="1456.0,969.0 1477.0,942.0 1497.0,942.0 1519.5,966.4 1628.0,1006.0 1652.8,1057.0 1640.0,1057.0 1516.0,1041.7 1460.0,980.0" fill="#819bc7"/><polygon points="1225.0,955.0 1452.0,955.0 1449.4,966.4 1517.0,1019.6 1522.7,1027.6 1515.0,1047.0 1350.0,1023.0 1283.0,995.0 1226.7,969.0" fill="#5562b8"/><path d="M1450,967 L1517,1019.6" stroke="#4a56ac" stroke-width="1.6"/><polygon points="1164.8,985.0 1183.0,1043.0 1190.0,1050.0 1213.0,1057.0 1511.7,1057.0 1515.0,1047.0 1350.0,1023.0 1283.0,995.0 1226.7,969.0 1200.0,975.0" fill="#8099dc"/><path d="M1020.8,945.2 C1022,938 1030,929 1040.8,920.7 C1050,915 1060,911.7 1074.4,907.1 L1080,906 L1080,974.5 L1073.1,973.6 C1060,970.5 1050,968 1040.8,964.6 C1032,960 1023,952 1020.8,945.2 Z" fill="#86a0cc"/><path d="M1074.4,907.1 L1158.4,883.2 L1245,862 L1277,857.4 L1400,841.4 L1411.7,840.3 L1429.4,846.2 L1442.7,859.5 L1450,880 L1450,955 L1432,972.4 L1400,976 L1264.8,984 L1245,987.2 L1157,982.7 L1074.4,973.6 Z" fill="#5562b8"/><ellipse cx="1096" cy="939" rx="31" ry="36" fill="#3b41ab"/><ellipse cx="1075" cy="941" rx="31" ry="33" fill="#5864bd"/><ellipse cx="1177.4" cy="930.4" rx="50.7" ry="54.2" fill="#3b41ab"/><polygon points="1145.4,902.6 1157.0,890.3 1185.5,885.2 1211.3,914.2 1211.3,938.8 1189.3,970.4 1161.0,970.4 1144.1,950.4 1139.0,928.4" fill="#5763bd"/><polygon points="1226.7,870.0 1261.8,871.1 1383.6,861.2 1400.0,881.8 1400.0,956.4 1336.4,960.9 1226.7,967.0" fill="#5562c0"/><polygon points="1277.0,857.4 1400.0,841.4 1411.7,840.3 1429.4,846.2 1442.7,859.5 1440.0,868.0 1400.0,881.8 1383.6,861.2 1261.8,871.1" fill="#3b41ab"/><polygon points="1226.7,967.0 1336.4,960.9 1400.0,956.4 1449.0,957.0 1432.0,972.4 1400.0,974.6 1264.8,982.3 1226.7,969.3" fill="#3b41ab"/><polygon points="1232.0,912.2 1264.0,868.0 1289.2,900.8 1286.0,904.6" fill="#3b41ab"/><polygon points="1233.6,941.9 1289.2,936.6 1269.4,970.8 1257.2,969.3" fill="#3b41ab"/><polygon points="1289.2,936.6 1315.0,933.5 1336.4,960.9 1271.0,967.0" fill="#5560a8"/><polygon points="1226.7,913.7 1313.5,905.4 1331.8,876.4 1383.6,871.1 1397.4,881.5 1400.5,934.0 1389.0,954.6 1336.4,960.9 1315.0,933.5 1226.7,937.3" fill="#8aa2d4"/><polygon points="1383.6,861.0 1442.7,859.5 1452.0,880.0 1452.0,955.0 1389.0,955.0 1400.5,934.0 1400.5,882.0" fill="#5262c8"/><path d="M1383.6,871.5 C1378,885 1375,900 1375.2,915 C1375,932 1380,946 1388,954.6 L1400.5,934 L1400.5,890 L1397.4,881.5 Z" fill="#87a5de"/><path d="M1222,905 C1226,918 1226,935 1222,948 L1228,946 L1228,907 Z" fill="#6a78c0" opacity="0.6"/><ellipse cx="1420" cy="908" rx="19.5" ry="30.5" fill="#3c48cc"/><ellipse cx="1415.7" cy="886.5" rx="5" ry="8.5" fill="#2a30d0"/><ellipse cx="1406.5" cy="901.8" rx="5" ry="8.5" fill="#2a30d0"/><ellipse cx="1418.7" cy="907.9" rx="5" ry="8.5" fill="#2a30d0"/><ellipse cx="1409.6" cy="923.1" rx="5" ry="8.5" fill="#2a30d0"/><ellipse cx="1422.8" cy="929.2" rx="5" ry="8.5" fill="#2a30d0"/><ellipse cx="1426.9" cy="888.6" rx="5" ry="8.5" fill="#2a30d0"/><ellipse cx="1430" cy="910" rx="5" ry="8.5" fill="#2a30d0"/><defs><linearGradient id="gPur" x1="0" y1="0" x2="0" y2="1"><stop offset="0" stop-color="#5e4a68"/><stop offset="0.35" stop-color="#4c3c58"/><stop offset="1" stop-color="#2c2236"/></linearGradient><linearGradient id="gOr" x1="0" y1="0" x2="0" y2="1"><stop offset="0" stop-color="#b0803e"/><stop offset="0.45" stop-color="#8c6430"/><stop offset="1" stop-color="#4e3818"/></linearGradient></defs><path d="M1447.5,905.7 L1544.5,891.8 L1544.5,912.8 L1447.5,922.7 Q1441.5,914.2 1447.5,905.7 Z" fill="url(#gPur)"/><path d="M1520.5,895.3 L1544.5,891.8 L1544.5,912.8 L1520.5,915.3 Q1516.5,905.3 1520.5,895.3 Z" fill="url(#gOr)"/><ellipse cx="1544.5" cy="902.3" rx="5.4" ry="10.5" fill="#ad7f42"/><path d="M1442.3,882.8 L1539.3,868.9 L1539.3,889.9 L1442.3,899.8 Q1436.3,891.3 1442.3,882.8 Z" fill="url(#gPur)"/><path d="M1515.3,872.4 L1539.3,868.9 L1539.3,889.9 L1515.3,892.4 Q1511.3,882.4 1515.3,872.4 Z" fill="url(#gOr)"/><ellipse cx="1539.3" cy="879.4" rx="5.4" ry="10.5" fill="#ad7f42"/><path d="M1439.4,925.6 L1536.4,911.7 L1536.4,932.7 L1439.4,942.6 Q1433.4,934.1 1439.4,925.6 Z" fill="url(#gPur)"/><path d="M1512.4,915.2 L1536.4,911.7 L1536.4,932.7 L1512.4,935.2 Q1508.4,925.2 1512.4,915.2 Z" fill="url(#gOr)"/><ellipse cx="1536.4" cy="922.2" rx="5.4" ry="10.5" fill="#ad7f42"/><path d="M1435.0,900.6 L1532.0,886.7 L1532.0,907.7 L1435.0,917.6 Q1429.0,909.1 1435.0,900.6 Z" fill="url(#gPur)"/><path d="M1508.0,890.2 L1532.0,886.7 L1532.0,907.7 L1508.0,910.2 Q1504.0,900.2 1508.0,890.2 Z" fill="url(#gOr)"/><ellipse cx="1532.0" cy="897.2" rx="5.4" ry="10.5" fill="#ad7f42"/><path d="M1432.7,874.0 L1529.7,860.1 L1529.7,881.1 L1432.7,891.0 Q1426.7,882.5 1432.7,874.0 Z" fill="url(#gPur)"/><path d="M1505.7,863.6 L1529.7,860.1 L1529.7,881.1 L1505.7,883.6 Q1501.7,873.6 1505.7,863.6 Z" fill="url(#gOr)"/><ellipse cx="1529.7" cy="870.6" rx="5.4" ry="10.5" fill="#ad7f42"/><path d="M1426.8,919.0 L1523.8,905.1 L1523.8,926.1 L1426.8,936.0 Q1420.8,927.5 1426.8,919.0 Z" fill="url(#gPur)"/><path d="M1499.8,908.6 L1523.8,905.1 L1523.8,926.1 L1499.8,928.6 Q1495.8,918.6 1499.8,908.6 Z" fill="url(#gOr)"/><ellipse cx="1523.8" cy="915.6" rx="5.4" ry="10.5" fill="#ad7f42"/><path d="M1423.1,892.4 L1520.1,878.5 L1520.1,899.5 L1423.1,909.4 Q1417.1,900.9 1423.1,892.4 Z" fill="url(#gPur)"/><path d="M1496.1,882.0 L1520.1,878.5 L1520.1,899.5 L1496.1,902.0 Q1492.1,892.0 1496.1,882.0 Z" fill="url(#gOr)"/><ellipse cx="1520.1" cy="889.0" rx="5.4" ry="10.5" fill="#ad7f42"/><path d="M1500,868 C1490,885 1490,920 1502,936 L1510,934 C1500,918 1500,885 1508,866 Z" fill="#2a2aa0" opacity="0.45"/></svg></svg>
</body></html>
